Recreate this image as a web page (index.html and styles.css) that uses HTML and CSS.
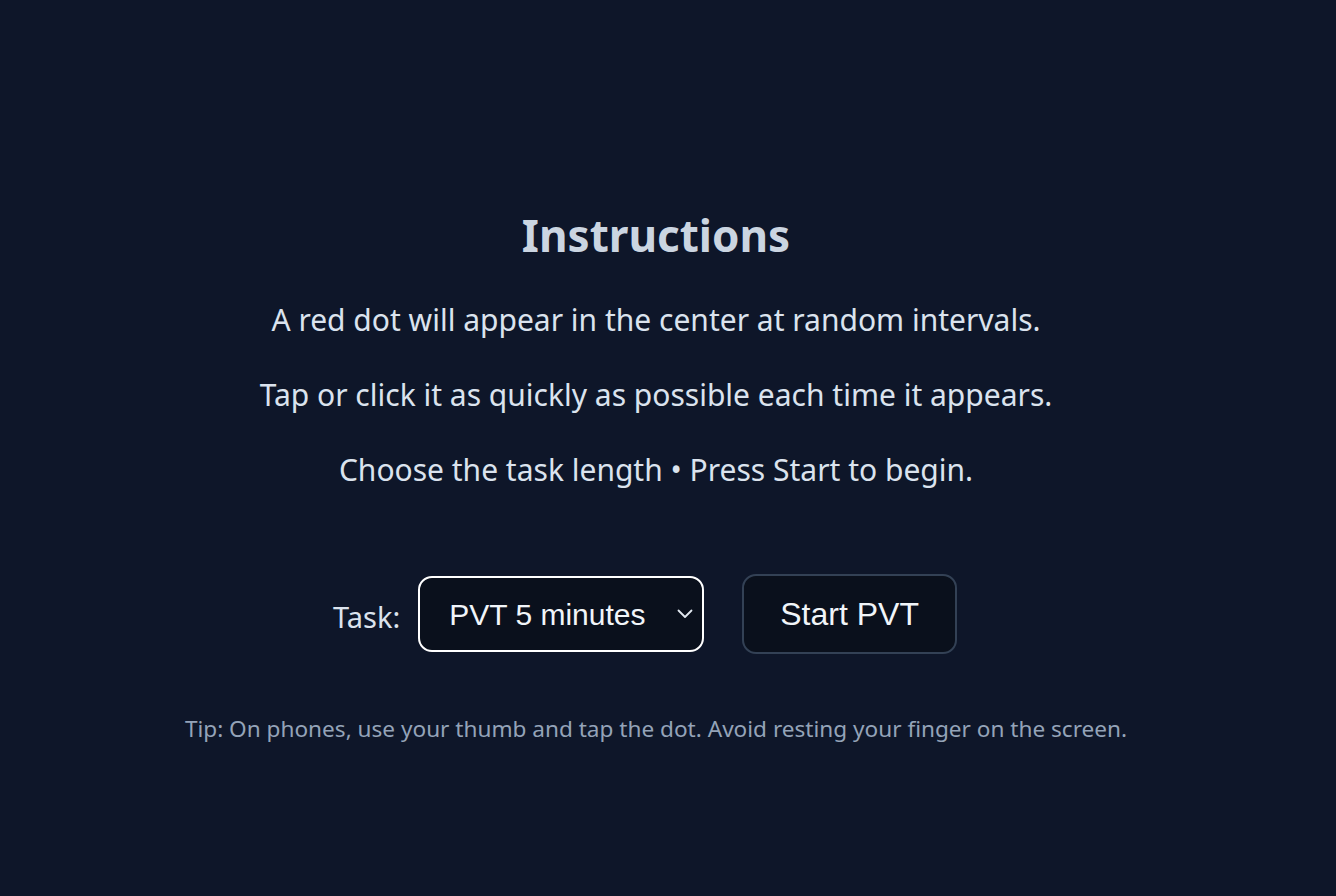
FILE: index.html
```html
<!DOCTYPE html>
<html lang="en">
<head>
    <meta charset="UTF-8">
    <meta name="viewport" content="width=device-width, initial-scale=1.0">
    <title>PVT</title>
    <link rel="stylesheet" href="styles.css">
</head>
<body>
    <div class="screen">
        <h1 class="title">Instructions</h1>
        <p class="line">A red dot will appear in the center at random intervals.</p>
        <p class="line">Tap or click it as quickly as possible each time it appears.</p>
        <p class="line">Choose the task length • Press Start to begin.</p>

        <div class="controls">
            <label class="task-label" for="task">Task:</label>
            <span class="select-wrap">
                <select class="task-select" id="task">
                    <option>PVT 5 minutes</option>
                    <option>PVT 3 minutes</option>
                    <option>PVT 10 minutes</option>
                </select>
                <svg class="chevron" width="16" height="10" viewBox="0 0 16 10" fill="none">
                    <path d="M1.5 1.5 L8 8 L14.5 1.5" stroke="#e2e8f0" stroke-width="1.8" stroke-linecap="round" stroke-linejoin="round"/>
                </svg>
            </span>
            <button class="start-button">Start PVT</button>
        </div>

        <p class="tip">Tip: On phones, use your thumb and tap the dot. Avoid resting your finger on the screen.</p>
    </div>
</body>
</html>
```

FILE: styles.css
```css
html, body {
    margin: 0;
    height: 100%;
}
body {
    background-color: #0e1629;
    color: #dbe3ee;
    font-family: "Noto Sans", "Open Sans", sans-serif;
}
.screen {
    display: flex;
    flex-direction: column;
    align-items: center;
    padding-top: 206px;
    padding-right: 24px;
}
.title {
    margin: 0 0 35px;
    font-size: 44px;
    line-height: 58px;
    font-weight: 700;
    color: #cbd5e1;
}
.line {
    margin: 0 0 33px;
    font-size: 30px;
    line-height: 42px;
}
.controls {
    display: flex;
    align-items: center;
    gap: 18px;
    margin-top: 50px;
    margin-right: 22px;
}
.task-label {
    font-size: 29px;
    margin-top: 4px;
}
.select-wrap {
    position: relative;
    display: flex;
}
.task-select {
    appearance: none;
    -webkit-appearance: none;
    width: 286px;
    height: 76px;
    padding: 0 40px 0 29px;
    font-family: "Liberation Sans", Arial, sans-serif;
    font-size: 30px;
    color: #f1f5f9;
    background-color: #0a101c;
    border: 2px solid #ffffff;
    border-radius: 14px;
}
.chevron {
    position: absolute;
    right: 11px;
    top: 33px;
    pointer-events: none;
}
.start-button {
    margin-left: 20px;
    height: 80px;
    padding: 0 36px;
    font-family: "Liberation Sans", Arial, sans-serif;
    font-size: 32px;
    color: #f1f5f9;
    background-color: #0a101c;
    border: 2px solid #334155;
    border-radius: 14px;
    cursor: pointer;
}
.tip {
    margin: 60px 0 0;
    font-size: 22.6px;
    line-height: 30px;
    color: #94a3b8;
}
```
